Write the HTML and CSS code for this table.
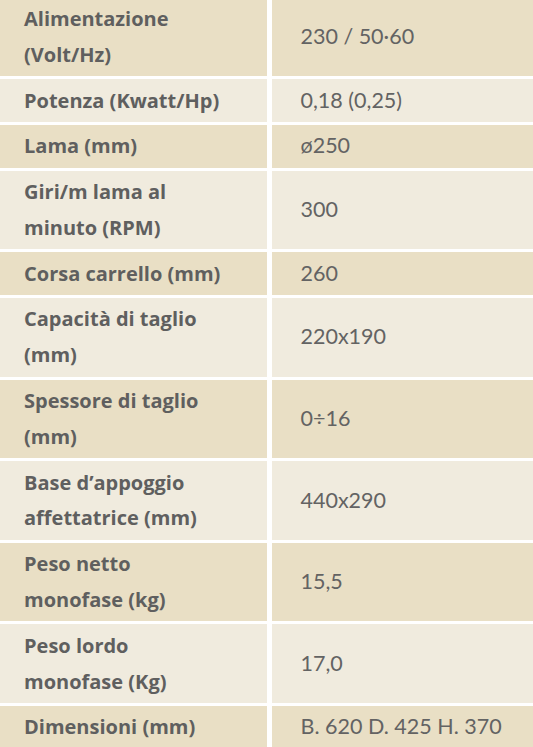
FILE: index.html
```html
<!DOCTYPE html>
<html lang="it">
<head>
<meta charset="utf-8">
<title>Scheda tecnica</title>
<link rel="stylesheet" href="styles.css">
</head>
<body>
<div class="specs">
  <div class="label row-dark">Alimentazione (Volt/Hz)</div><div class="value row-dark">230 / 50·60</div>
  <div class="label row-light">Potenza (Kwatt/Hp)</div><div class="value row-light">0,18 (0,25)</div>
  <div class="label row-dark">Lama (mm)</div><div class="value row-dark">ø250</div>
  <div class="label row-light">Giri/m lama al minuto (RPM)</div><div class="value row-light">300</div>
  <div class="label row-dark">Corsa carrello (mm)</div><div class="value row-dark">260</div>
  <div class="label row-light">Capacità di taglio (mm)</div><div class="value row-light">220x190</div>
  <div class="label row-dark">Spessore di taglio (mm)</div><div class="value row-dark">0÷16</div>
  <div class="label row-light">Base d’appoggio affettatrice (mm)</div><div class="value row-light">440x290</div>
  <div class="label row-dark">Peso netto monofase (kg)</div><div class="value row-dark">15,5</div>
  <div class="label row-light">Peso lordo monofase (Kg)</div><div class="value row-light">17,0</div>
  <div class="label row-dark">Dimensioni (mm)</div><div class="value row-dark">B. 620 D. 425 H. 370</div>
</div>
</body>
</html>
```
FILE: styles.css
```css
html, body {
  margin: 0;
  padding: 0;
  background: #ffffff;
}
body {
  overflow: hidden;
}
.specs {
  display: grid;
  grid-template-columns: 266.5px 1fr;
  column-gap: 5px;
  row-gap: 3px;
  margin-top: -2.6px;
  color: #5f5f5f;
}
.label, .value {
  display: flex;
  align-items: center;
  padding: 3.5px 0;
  line-height: 35.8px;
}
.label {
  padding-left: 24px;
  padding-right: 37px;
  font-family: "Open Sans", Lato, sans-serif;
  font-weight: 700;
  font-size: 20px;
}
.value {
  padding-left: 29px;
  font-family: Lato, "Open Sans", sans-serif;
  font-weight: 400;
  font-size: 21.5px;
  color: #636363;
}
.row-dark {
  background: #e9dfc5;
}
.row-light {
  background: #f0ebde;
}
```
